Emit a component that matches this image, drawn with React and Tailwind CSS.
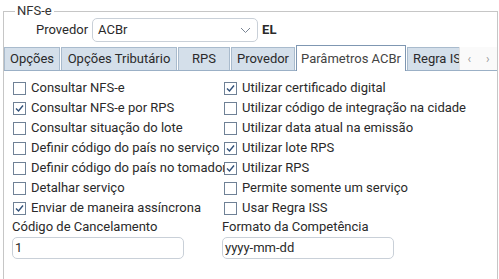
import React from "react";

function Box({ checked }) {
  return (
    <span className="w-[13px] h-[13px] border border-[#6f8196] bg-white flex items-center justify-center shrink-0">
      {checked && (
        <svg width="11" height="11" viewBox="0 0 11 11">
          <polyline points="2,5.5 4.5,8 9,2.5" fill="none" stroke="#30507a" strokeWidth="1.4" />
        </svg>
      )}
    </span>
  );
}

function Check({ label, checked }) {
  return (
    <div className="h-[20px] flex items-center gap-[5px] whitespace-nowrap">
      <Box checked={checked} />
      <span>{label}</span>
    </div>
  );
}

const left = [
  ["Consultar NFS-e", false],
  ["Consultar NFS-e por RPS", true],
  ["Consultar situação do lote", false],
  ["Definir código do país no serviço", false],
  ["Definir código do país no tomador", false],
  ["Detalhar serviço", false],
  ["Enviar de maneira assíncrona", true],
];
const right = [
  ["Utilizar certificado digital", true],
  ["Utilizar código de integração na cidade", false],
  ["Utilizar data atual na emissão", false],
  ["Utilizar lote RPS", true],
  ["Utilizar RPS", true],
  ["Permite somente um serviço", false],
  ["Usar Regra ISS", false],
];

const tabs = [
  ["Opções", "w-[56px]"],
  ["Opções Tributário", "w-[116px]"],
  ["RPS", "w-[52px]"],
  ["Provedor", "w-[64px]"],
];

export default function App() {
  return (
    <div className="w-[499px] h-[279px] bg-white overflow-hidden text-[13px] text-[#2a2a2a]" style={{ fontFamily: "Roboto, 'Liberation Sans', sans-serif" }}>
      <div className="pt-[11px] pl-[3px]">
        <div className="relative w-[495px] h-[300px] border border-[#c6c6c6]">
          <div className="absolute -top-[9px] left-[11px] bg-white px-[2px] leading-[16px] text-[#333]">NFS-e</div>
          <div className="mt-[6px] pl-[32px] flex items-center h-[24px]">
            <span className="mr-[4px]">Provedor</span>
            <div className="w-[166px] h-[24px] border border-[#c9d0d8] rounded-[5px] flex items-center justify-between pl-[5px] pr-[6px]">
              <span>ACBr</span>
              <svg width="11" height="7" viewBox="0 0 11 7">
                <polyline points="1,1 5.5,5.5 10,1" fill="none" stroke="#7a8594" strokeWidth="1" />
              </svg>
            </div>
            <span className="ml-[4px] font-bold">EL</span>
          </div>
          <div className="mt-[4px] flex items-end h-[25px] border-b border-[#9bb0c6] relative">
            {tabs.map(([t, w]) => (
              <div key={t} className={`${w} h-[23px] mr-[1px] bg-[#d4dfea] border border-b-0 border-[#a9bbcd] flex items-center justify-center`}>
                {t}
              </div>
            ))}
            <div className="w-[110px] h-[26px] -mb-[1px] mr-[1px] bg-white border border-b-0 border-[#7f97b2] flex items-start pt-[3px] justify-center text-[#444]">
              Parâmetros ACBr
            </div>
            <div className="w-[62px] h-[23px] bg-[#d4dfea] border border-b-0 border-[#a9bbcd] flex items-center pl-[5px] whitespace-nowrap">
              Regra ISS
            </div>
            <div className="absolute right-0 bottom-0 w-[38px] h-[23px] bg-[#fafafa] border-l border-[#e2e2e2] flex items-center justify-around text-[#9a9a9a] text-[12px]">
              <span>‹</span>
              <span>›</span>
            </div>
          </div>
          <div className="pt-[7px] pl-[9px] grid grid-cols-[211px_1fr]">
            <div>
              {left.map(([l, c]) => (
                <Check key={l} label={l} checked={c} />
              ))}
            </div>
            <div>
              {right.map(([l, c]) => (
                <Check key={l} label={l} checked={c} />
              ))}
            </div>
          </div>
          <div className="pl-[8px] grid grid-cols-[210px_1fr]">
            <div>
              <div className="h-[17px] leading-[17px]">Código de Cancelamento</div>
              <div className="mt-[2px] w-[172px] h-[22px] border border-[#c9d0d8] rounded-[5px] flex items-center pl-[2px]">1</div>
            </div>
            <div>
              <div className="h-[17px] leading-[17px]">Formato da Competência</div>
              <div className="mt-[2px] w-[172px] h-[22px] border border-[#c9d0d8] rounded-[5px] flex items-center pl-[2px]">yyyy-mm-dd</div>
            </div>
          </div>
        </div>
      </div>
    </div>
  );
}
